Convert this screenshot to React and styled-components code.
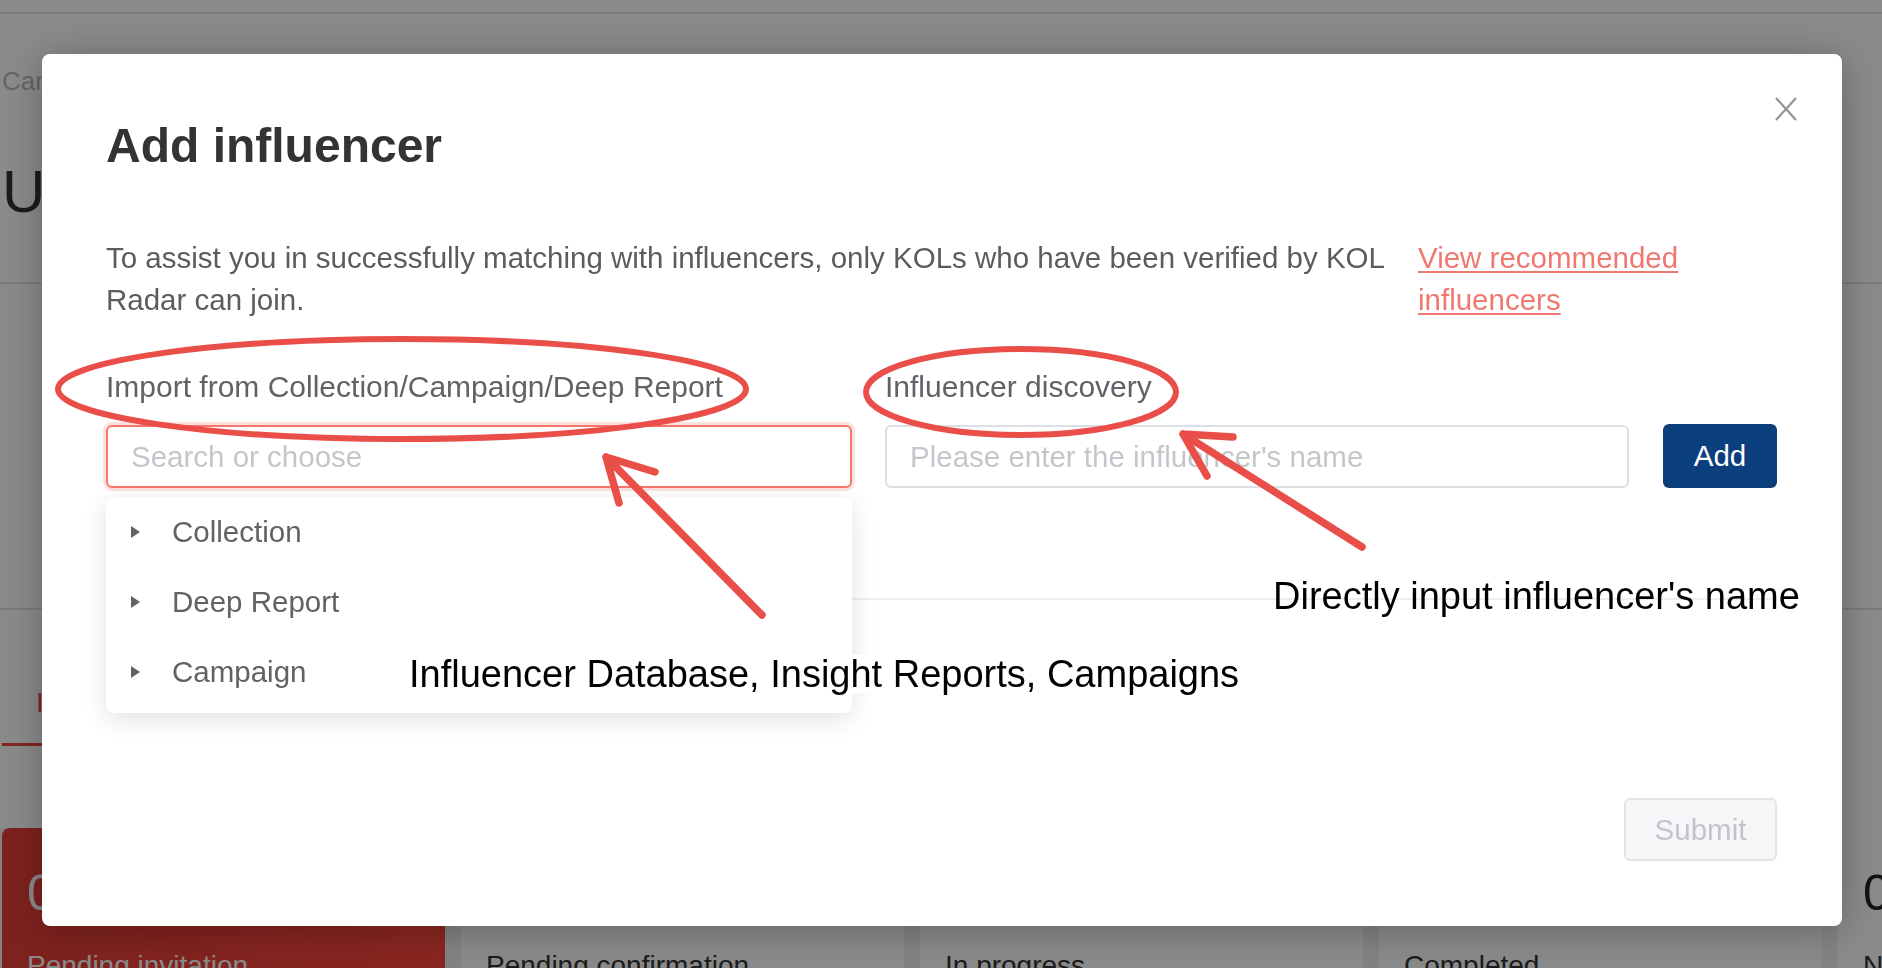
import React from "react";
import styled, { createGlobalStyle } from "styled-components";

const GlobalStyle = createGlobalStyle`
  * { box-sizing: border-box; }
  html, body { margin: 0; padding: 0; }
  body {
    width: 1882px;
    height: 968px;
    overflow: hidden;
    background: #fff;
    font-family: "Liberation Sans", Arial, sans-serif;
  }
`;

/* ---------- page behind the dialog ---------- */

const Page = styled.div`
  width: 1882px;
  height: 968px;
  overflow: hidden;
  background: #fff;
`;

const TopBar = styled.div`
  height: 14px;
  border-bottom: 2px solid #e2e2e2;
`;

const Breadcrumb = styled.div`
  margin: 49px 0 0 2px;
  font-size: 26px;
  line-height: 36px;
  color: #bababa;
  white-space: nowrap;
`;

const PageTitle = styled.h1`
  margin: 57px 0 0 2px;
  font-size: 60px;
  line-height: 72px;
  font-weight: 500;
  color: #333;
  white-space: nowrap;
`;

const PageRule = styled.div`
  height: 2px;
  background: #e4e4e4;
  margin-top: ${(p) => p.$gap}px;
`;

const TabBar = styled.div`
  display: flex;
  margin-top: 73px;
`;

const Tab = styled.div`
  padding: 0 40px 20px 34px;
  margin-left: 2px;
  font-size: 28px;
  line-height: 40px;
  color: #f0453e;
  border-bottom: 3px solid #f0453e;
`;

const CardRow = styled.div`
  display: flex;
  gap: 16px;
  margin-top: 82px;
  padding-left: 2px;
  background: #f1f1f1;
`;

const StatCard = styled.div`
  flex: 0 0 443px;
  height: 200px;
  padding: 37px 25px 0;
  border-radius: 8px 8px 0 0;
  background: ${(p) => (p.$active ? "linear-gradient(100deg, #e63e37, #ff463d)" : "#fff")};
  color: ${(p) => (p.$active ? "#fff" : "#333")};
`;

const StatValue = styled.div`
  font-size: 50px;
  line-height: 56px;
  color: ${(p) => (p.$active ? "#fff" : "#222")};
`;

const StatLabel = styled.div`
  margin-top: 27px;
  font-size: 28px;
  line-height: 36px;
  white-space: nowrap;
`;

/* ---------- dialog ---------- */

const Overlay = styled.div`
  position: fixed;
  inset: 0;
  background: rgba(0, 0, 0, 0.46);
`;

const Dialog = styled.div`
  position: fixed;
  left: 42px;
  top: 54px;
  width: 1800px;
  height: 872px;
  padding: 64px 65px 65px 64px;
  display: flex;
  flex-direction: column;
  background: #fff;
  border-radius: 8px;
  box-shadow: 0 4px 40px rgba(0, 0, 0, 0.28);
`;

const CloseButton = styled.button`
  position: absolute;
  top: 43px;
  right: 45px;
  width: 22px;
  height: 24px;
  padding: 0;
  border: 0;
  background: none;
  display: flex;
  cursor: pointer;
`;

const DialogTitle = styled.h2`
  margin: 0;
  font-size: 48px;
  line-height: 56px;
  font-weight: 700;
  color: #333;
`;

const NoticeRow = styled.div`
  display: flex;
  gap: 24px;
  margin-top: 63px;
  font-size: 29.5px;
  line-height: 42px;
`;

const Notice = styled.p`
  flex: 1;
  margin: 0;
  color: #5c5c5c;
`;

const RecommendLink = styled.a`
  flex: 0 0 359px;
  color: #ef7870;
  text-decoration: underline;
  text-decoration-thickness: 2px;
  text-underline-offset: 3px;
  cursor: pointer;
`;

const FormRow = styled.div`
  display: flex;
  gap: 33px;
  margin-top: 45px;
`;

const Field = styled.div`
  position: relative;
  flex: ${(p) => (p.$width ? `0 0 ${p.$width}px` : "1")};
  display: flex;
  flex-direction: column;
`;

const FieldLabel = styled.label`
  font-size: 30px;
  line-height: 42px;
  color: #5f6266;
  margin-bottom: 17px;
  white-space: nowrap;
`;

const InputLine = styled.div`
  display: flex;
  gap: 34px;
`;

const TextInput = styled.input`
  flex: 1;
  min-width: 0;
  height: 63px;
  padding: 0 23px;
  font-family: inherit;
  font-size: 29.5px;
  color: #333;
  background: #fff;
  border: 2px solid ${(p) => (p.$focused ? "#f7766b" : "#dcdfe6")};
  border-radius: 6px;
  outline: none;
  box-shadow: ${(p) => (p.$focused ? "0 0 0 3px rgba(247, 118, 107, 0.22)" : "none")};

  &::placeholder {
    color: #c4c6cb;
  }
`;

const AddButton = styled.button`
  flex: 0 0 114px;
  height: 64px;
  margin-top: -1px;
  border: 0;
  border-radius: 6px;
  background: #0b3e7d;
  color: #fff;
  font-family: inherit;
  font-size: 29.5px;
  cursor: pointer;
`;

const SourceMenu = styled.ul`
  position: absolute;
  top: calc(100% + 9px);
  left: 0;
  width: 100%;
  margin: 0;
  padding: 0 0 6px;
  list-style: none;
  background: #fff;
  border-radius: 7px;
  box-shadow: 0 6px 24px rgba(0, 0, 0, 0.12);
  z-index: 2;
`;

const SourceItem = styled.li`
  height: 70px;
  display: flex;
  align-items: center;
  gap: 32px;
  padding-left: 25px;
  font-size: 29.5px;
  color: #5f6266;
`;

const Caret = styled.span`
  width: 0;
  height: 0;
  border-top: 6px solid transparent;
  border-bottom: 6px solid transparent;
  border-left: 9px solid #5f6266;
`;

const ListRule = styled.div`
  height: 2px;
  margin-top: 110px;
  background: #ebeef5;
`;

const Footer = styled.div`
  margin-top: auto;
  display: flex;
  justify-content: flex-end;
`;

const SubmitButton = styled.button`
  width: 153px;
  height: 63px;
  border: 2px solid #e2e4e8;
  border-radius: 6px;
  background: #f5f6f8;
  color: #c2c4c9;
  font-family: inherit;
  font-size: 29.5px;
  cursor: not-allowed;
`;

/* ---------- red annotations drawn over the screenshot ---------- */

const Annotations = styled.svg`
  position: fixed;
  left: 0;
  top: 0;
  pointer-events: none;
`;

const Note = styled.div`
  position: fixed;
  left: ${(p) => p.$x}px;
  top: ${(p) => p.$y}px;
  font-family: "Liberation Sans", Arial, sans-serif;
  font-size: 38px;
  line-height: 38px;
  color: #000;
  white-space: nowrap;
  background: ${(p) => (p.$solid ? "#fff" : "transparent")};
`;

const sources = ["Collection", "Deep Report", "Campaign"];
const stats = [
  { label: "Pending invitation", active: true },
  { label: "Pending confirmation" },
  { label: "In progress" },
  { label: "Completed" },
  { label: "Not cooperating" },
];

export default function App() {
  return (
    <>
      <GlobalStyle />
      <Page>
        <TopBar />
        <Breadcrumb>Campaigns / Campaign details</Breadcrumb>
        <PageTitle>Untitled campaign</PageTitle>
        <PageRule $gap={54} />
        <PageRule $gap={324} />
        <TabBar>
          <Tab>Influencers</Tab>
        </TabBar>
        <CardRow>
          {stats.map((s) => (
            <StatCard key={s.label} $active={s.active}>
              <StatValue $active={s.active}>0</StatValue>
              <StatLabel>{s.label}</StatLabel>
            </StatCard>
          ))}
        </CardRow>
      </Page>

      <Overlay />
      <Dialog>
        <CloseButton aria-label="Close">
          <svg width="22" height="24" viewBox="0 0 22 24">
            <path d="M1 1 L21 23 M21 1 L1 23" stroke="#929497" strokeWidth="2.2" fill="none" />
          </svg>
        </CloseButton>
        <DialogTitle>Add influencer</DialogTitle>
        <NoticeRow>
          <Notice>
            To assist you in successfully matching with influencers, only KOLs who have been
            verified by KOL Radar can join.
          </Notice>
          <RecommendLink>View recommended influencers</RecommendLink>
        </NoticeRow>
        <FormRow>
          <Field $width={746}>
            <FieldLabel>Import from Collection/Campaign/Deep Report</FieldLabel>
            <TextInput $focused placeholder="Search or choose" />
            <SourceMenu>
              {sources.map((s) => (
                <SourceItem key={s}>
                  <Caret />
                  {s}
                </SourceItem>
              ))}
            </SourceMenu>
          </Field>
          <Field>
            <FieldLabel>Influencer discovery</FieldLabel>
            <InputLine>
              <TextInput placeholder="Please enter the influencer's name" />
              <AddButton>Add</AddButton>
            </InputLine>
          </Field>
        </FormRow>
        <ListRule />
        <Footer>
          <SubmitButton disabled>Submit</SubmitButton>
        </Footer>
      </Dialog>

      <Annotations width="1882" height="968" viewBox="0 0 1882 968">
        <g fill="none" stroke="#ea4e49" strokeLinecap="round" strokeLinejoin="round">
          <ellipse cx="402" cy="389" rx="344" ry="50" strokeWidth="6" />
          <ellipse cx="1021" cy="392" rx="155" ry="43" strokeWidth="6" />
          <path d="M762 615 L606 457 M655 472 L606 457 L619 503" strokeWidth="7.5" />
          <path d="M1362 547 L1183 434 M1233 437 L1183 434 L1207 476" strokeWidth="7.5" />
        </g>
      </Annotations>
      <Note $x={409} $y={655} $solid>
        Influencer Database, Insight Reports, Campaigns
      </Note>
      <Note $x={1273} $y={577}>
        Directly input influencer's name
      </Note>
    </>
  );
}
